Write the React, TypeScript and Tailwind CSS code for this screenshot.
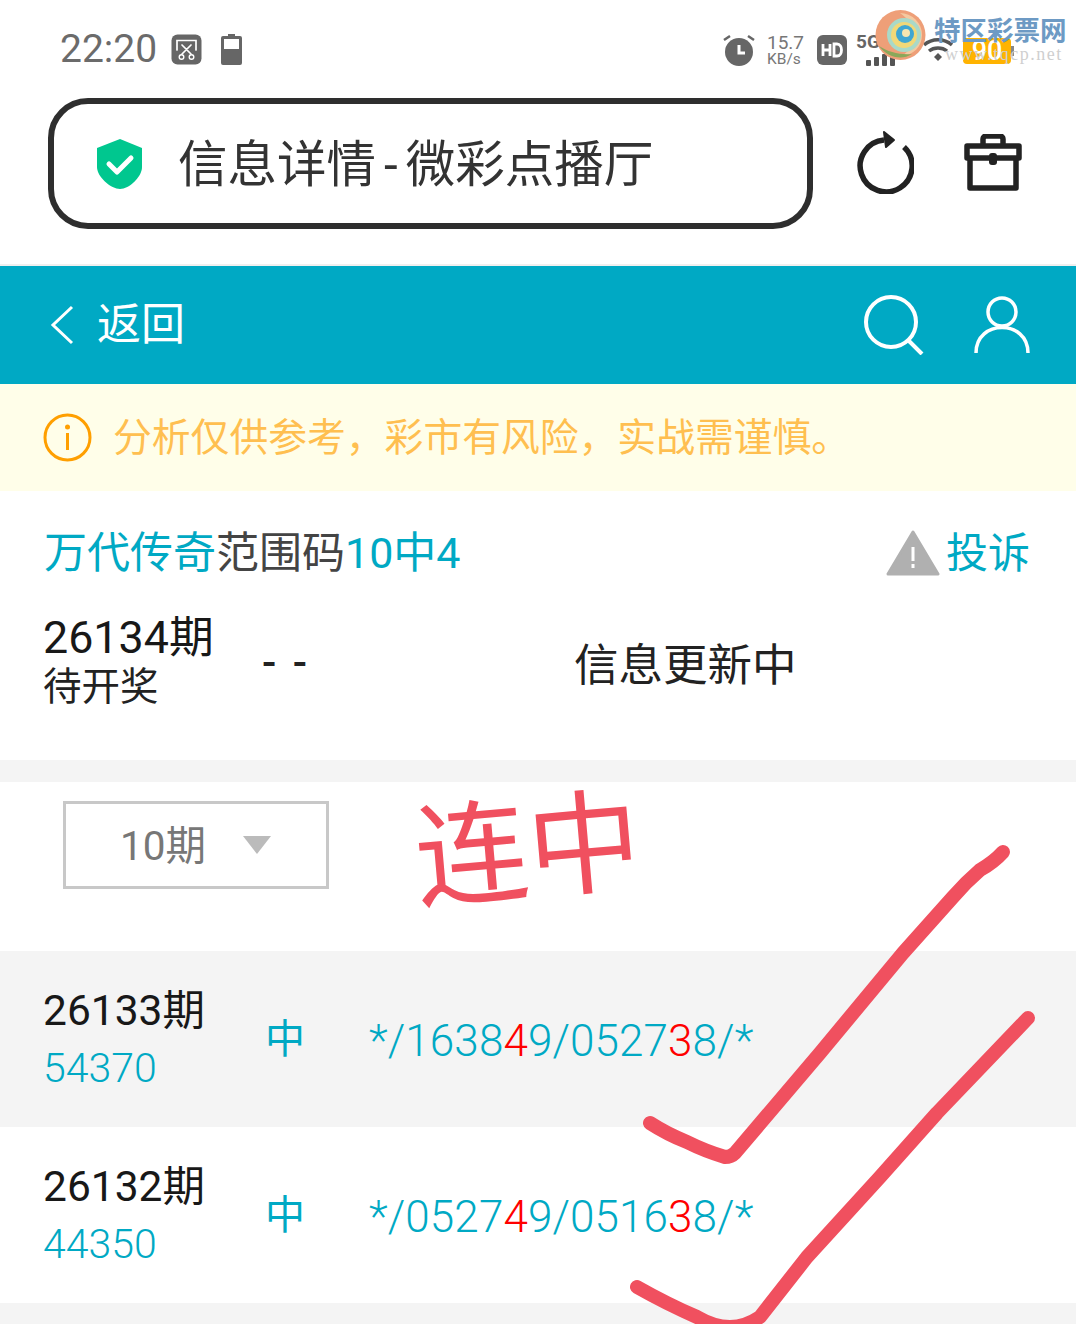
import React from "react";

const sans = 'font-["Roboto","Noto_Sans_CJK_SC",sans-serif]';

function Row({ issue, code, a, b, bg }: { issue: string; code: string; a: [string, string, string]; b: [string, string, string]; bg: string }) {
  return (
    <div className={`h-[176px] flex items-start pl-[43px] ${bg}`}>
      <div className="w-[222px] pt-[36px]">
        <div className="text-[42.500px] leading-[48px] text-[#181818]">{issue}</div>
        <div className="text-[41px] leading-[48px] text-[#00a9c4] mt-[9px] font-light">{code}</div>
      </div>
      <div className="text-[40px] leading-[48px] text-[#00a9c4] pt-[65px] w-[104px]">中</div>
      <div className="text-[44px] leading-[48px] text-[#00a9c4] pt-[66px] font-light whitespace-nowrap tracking-[0.1px]">
        */{a[0]}<span className="text-[#ff0000]">{a[1]}</span>{a[2]}/{b[0]}<span className="text-[#ff0000]">{b[1]}</span>{b[2]}/*
      </div>
    </div>
  );
}

export default function App() {
  return (
    <div className={`relative w-[1076px] h-[1324px] overflow-hidden bg-white ${sans}`}>
      {/* status bar */}
      <div className="h-[98px] flex items-start justify-between pl-[60px] pr-[62px] pt-[28px]">
        <div className="flex items-center gap-[14px] h-[42px]">
          <span className="text-[39px] leading-[42px] text-[#6b6b6b]">22:20</span>
          <svg width="31" height="31" viewBox="0 0 31 31">
            <rect width="30" height="30" x="0.5" y="0.5" rx="6" fill="#666" />
            <path d="M6 16V6.500h19V16M11 11l9 9M20 11l-9 9" stroke="#fff" strokeWidth="1.700" fill="none" strokeLinecap="round" />
            <circle cx="10.500" cy="23" r="2.300" stroke="#fff" strokeWidth="1.400" fill="none" />
            <circle cx="20.500" cy="23" r="2.300" stroke="#fff" strokeWidth="1.400" fill="none" />
          </svg>
          <svg className="ml-[5px]" width="21" height="31" viewBox="0 0 21 31">
            <path d="M7 0h7v2h5a2 2 0 0 1 2 2v25a2 2 0 0 1-2 2H2a2 2 0 0 1-2-2V4a2 2 0 0 1 2-2h5z" fill="#666" />
            <rect x="3" y="5" width="15" height="10" fill="#fff" />
          </svg>
        </div>
        <div className="flex items-center h-[42px] pt-[2px]">
          <svg width="32" height="32" viewBox="0 0 32 32" className="mr-[12px]">
            <circle cx="16" cy="18" r="14" fill="#666" />
            <path d="M1 6l6-4M31 6l-6-4" stroke="#666" strokeWidth="2.500" />
            <path d="M16 11v8h6" stroke="#fff" strokeWidth="3" fill="none" />
          </svg>
          <div className="w-[48px] text-[#777] leading-none mr-[2px]">
            <div className="text-[19px] leading-[18px]">15.7</div>
            <div className="text-[15.500px] leading-[15px]">KB/s</div>
          </div>
          <svg width="30" height="30" viewBox="0 0 30 30" className="mr-[9px]">
            <rect width="30" height="30" rx="6" fill="#666" />
            <path d="M6 9v12M13 9v12M6 15h7M17 9v12h3c6 0 6-12 0-12z" stroke="#fff" strokeWidth="2.800" fill="none" />
          </svg>
          <div className="w-[50px] relative h-[32px] mr-[17px]">
            <div className="text-[19px] leading-[18px] font-bold text-[#666] -mt-[1px]">5G</div>
            <div className="absolute left-[10px] bottom-0 flex items-end gap-[3px]">
              <span className="w-[5px] h-[6px] bg-[#555] rounded-[1px]" />
              <span className="w-[5px] h-[9px] bg-[#555] rounded-[1px]" />
              <span className="w-[5px] h-[12px] bg-[#555] rounded-[1px]" />
              <span className="w-[5px] h-[15px] bg-[#555] rounded-[1px]" />
            </div>
          </div>
          <svg width="30" height="28" viewBox="0 0 30 28" className="mr-[10px]">
            <path d="M1 9c8-7 20-7 28 0M6 15c5-4 13-4 18 0" stroke="#555" strokeWidth="3.500" fill="none" />
            <path d="M11 21l4-4v8zM19 21l-4-4v8z" fill="#555" />
          </svg>
          <div className="flex items-center mt-[1px]">
            <div className="w-[48px] h-[26px] bg-[#ffb300] rounded-[4px] text-white text-[27px] leading-[26px] font-medium text-center">90</div>
            <span className="w-[3px] h-[10px] bg-[#888]" />
          </div>
        </div>
      </div>

      {/* address bar */}
      <div className="h-[168px] border-b-[2px] border-[#efefef] flex items-start pl-[48px]">
        <div className="w-[765px] h-[131px] border-[6px] border-[#2e2e2e] rounded-[40px] flex items-center pl-[43px]">
          <svg width="46" height="50" viewBox="0 0 46 50">
            <path d="M23 0l22 9v19c0 10-13 22-22 22S0 38 0 28V9z" fill="#00c78f" />
            <path d="M12 25l8 8 14-14" stroke="#fff" strokeWidth="5" fill="none" strokeLinecap="round" strokeLinejoin="round" />
          </svg>
          <span className="ml-[35px] mt-[3px] text-[49.500px] leading-[56px] text-[#333] whitespace-nowrap">信息详情<span className="mx-[8px]">-</span>微彩点播厅</span>
        </div>
        <svg width="58" height="64" viewBox="0 0 58 64" className="ml-[43px] mt-[32px]">
          <path d="M48 17A26 26 0 1 1 28 10" stroke="#222" strokeWidth="5.500" fill="none" strokeLinecap="butt" />
          <path d="M28 2l10 8-8 7z" fill="#222" stroke="#222" strokeWidth="2" strokeLinejoin="round" />
        </svg>
        <svg width="58" height="58" viewBox="0 0 58 58" className="ml-[50px] mt-[36px]">
          <path d="M3 12h52v12H3zM6 24v30h46V24M19 12V5a3 3 0 0 1 3-3h14a3 3 0 0 1 3 3v7" stroke="#222" strokeWidth="5.500" fill="none" strokeLinejoin="round" />
          <rect x="25" y="19" width="8" height="12" rx="3" fill="#222" />
        </svg>
      </div>

      {/* teal header */}
      <div className="h-[118px] bg-[#00a9c4] flex items-center justify-between pl-[50px] pr-[46px] text-white">
        <div className="flex items-center">
          <svg width="24" height="40" viewBox="0 0 24 40"><path d="M22 2L3 20l19 18" stroke="#fff" strokeWidth="3" fill="none" /></svg>
          <span className="ml-[23px] text-[44px] leading-[50px]">返回</span>
        </div>
        <div className="flex items-center gap-[50px]">
          <svg width="60" height="60" viewBox="0 0 60 60">
            <circle cx="27" cy="27" r="25" stroke="#fff" strokeWidth="4" fill="none" />
            <path d="M44 45l14 14" stroke="#fff" strokeWidth="4" />
          </svg>
          <svg width="56" height="58" viewBox="0 0 56 58">
            <circle cx="28" cy="16" r="14" stroke="#fff" strokeWidth="3.500" fill="none" />
            <path d="M2 57c0-34 52-34 52 0" stroke="#fff" strokeWidth="3.500" fill="none" />
          </svg>
        </div>
      </div>

      {/* notice */}
      <div className="h-[107px] bg-[#fffee9] flex items-center pl-[43px]">
        <svg width="49" height="49" viewBox="0 0 49 49">
          <circle cx="24.500" cy="24.500" r="22.500" stroke="#ff9f00" strokeWidth="3" fill="none" />
          <circle cx="24.500" cy="14" r="2.500" fill="#ff9f00" />
          <rect x="23" y="20" width="3" height="17" fill="#ff9f00" />
        </svg>
        <span className="ml-[21px] text-[38.800px] leading-[46px] text-[#ffbf50] whitespace-nowrap [text-spacing-trim:space-all]">分析仅供参考，彩市有风险，实战需谨慎。</span>
      </div>

      {/* title and current issue */}
      <div className="h-[269px] flex flex-col">
        <div className="flex items-center justify-between pl-[44px] pr-[46px] pt-[35px]">
          <div className="text-[43px] leading-[52px] text-[#00a9c4] whitespace-nowrap">
            万代传奇<span className="text-[#444]">范围码</span>10中4
          </div>
          <div className="flex items-center gap-[6px]">
            <svg width="54" height="46" viewBox="0 0 54 46">
              <path d="M27 2L52 44H2z" fill="#b0b0b0" stroke="#b0b0b0" strokeWidth="3" strokeLinejoin="round" />
              <rect x="25.500" y="17" width="3" height="14" fill="#fff" />
              <rect x="25.500" y="34" width="3" height="4" fill="#fff" />
            </svg>
            <span className="text-[42px] leading-[50px] text-[#00a9c4] mt-[3px]">投诉</span>
          </div>
        </div>
        <div className="flex items-center pl-[43px] mt-[34px]">
          <div className="w-[219px]">
            <div className="text-[44.800px] leading-[50px] text-[#181818]">26134期</div>
            <div className="text-[38.500px] leading-[46px] text-[#222] mt-[1px]">待开奖</div>
          </div>
          <div className="w-[312px] text-[#222] text-[42px] leading-[50px] font-medium tracking-[3px] mt-[2px]">- -</div>
          <div className="text-[44.500px] leading-[54px] text-[#222] mt-[9px]">信息更新中</div>
        </div>
      </div>

      <div className="h-[22px] bg-[#f4f4f4]" />

      {/* select */}
      <div className="h-[169px] pl-[63px] pt-[19px]">
        <div className="w-[266px] h-[88px] border-[3px] border-[#c8c8c8] flex items-center pl-[54px]">
          <span className="text-[40.500px] leading-[50px] text-[#777] mt-[2px]">10期</span>
          <span className="ml-[37px] w-0 h-0 border-x-[14px] border-x-transparent border-t-[18px] border-t-[#bbb]" />
        </div>
      </div>

      <Row bg="bg-[#f4f4f4]" issue="26133期" code="54370" a={["1638", "4", "9"]} b={["0527", "3", "8"]} />
      <Row bg="bg-white" issue="26132期" code="44350" a={["0527", "4", "9"]} b={["0516", "3", "8"]} />
      <div className="h-[21px] bg-[#f4f4f4]" />

      {/* handwritten overlay */}
      <div className="absolute left-[415px] top-[792px] text-[113px] leading-[120px] text-[#f0505f] -rotate-[5deg] whitespace-nowrap">连中</div>
      <svg className="absolute left-0 top-0 pointer-events-none" width="1076" height="1324" viewBox="0 0 1076 1324" fill="none">
        <path d="M650 1123Q667 1134 687 1142Q705 1151 725 1157Q731 1157 735 1153L820 1053L903 953L953 897Q966 882 980 870Q994 862 1003 852" stroke="#f0505f" strokeWidth="14" strokeLinecap="round" strokeLinejoin="round" />
        <path d="M637 1287Q667 1304 697 1317Q714 1327 730 1327Q745 1327 760 1317L807 1257L880 1177L937 1113L1028 1018" stroke="#f0505f" strokeWidth="14" strokeLinecap="round" strokeLinejoin="round" />
      </svg>

      {/* watermark */}
      <svg className="absolute left-[875px] top-[10px]" width="52" height="50" viewBox="0 0 52 50">
        <circle cx="25.500" cy="25" r="25" fill="#ee9f78" />
        <path d="M25 3a22 22 0 0 1 22 22c0 12-9 20-20 21 8-6 13-12 13-21 0-9-7-16-15-22z" fill="#f4c9a0" />
        <circle cx="29" cy="25" r="17" fill="#a9d9c8" />
        <circle cx="29" cy="25" r="13" fill="#f1d878" />
        <circle cx="30" cy="24" r="9" fill="#3fa6d2" />
        <circle cx="31" cy="23" r="4" fill="#f6e6b0" />
        <path d="M4 36c8 11 22 15 33 8-12 1-24-2-33-8z" fill="#8aa85a" />
      </svg>
      <div className="absolute left-[934px] top-[14px] text-[26.500px] leading-[34px] font-bold text-[#6d9ac4] whitespace-nowrap">特区彩票网</div>
      <div className="absolute left-[945px] top-[44px] text-[18px] leading-[20px] text-[#cfcfcf] whitespace-nowrap tracking-[1.500px] font-['Liberation_Serif',serif]">www.tqcp.net</div>
    </div>
  );
}
